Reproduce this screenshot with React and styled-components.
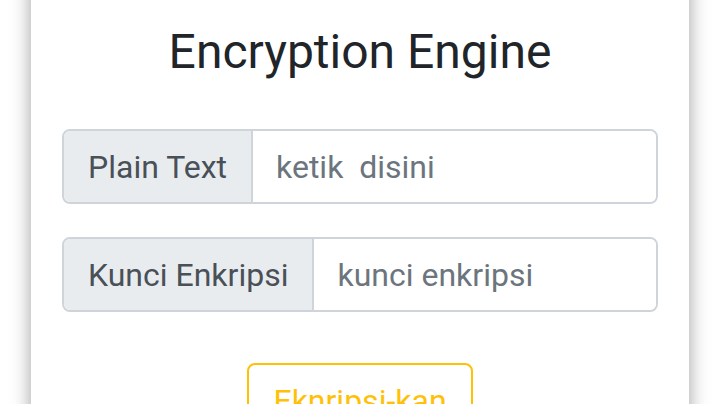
import React from 'react';
import styled, { createGlobalStyle } from 'styled-components';

const GlobalStyle = createGlobalStyle`
	* { box-sizing: border-box; }
	body {
		margin: 0;
		background: #ffffff;
		font-family: Roboto, "Liberation Sans", sans-serif;
		overflow: hidden;
	}
`;

const Page = styled.div`
	display: flex;
	justify-content: center;
	align-items: flex-start;
	height: 404px;
	overflow: hidden;
`;

const Card = styled.div`
	width: 658px;
	margin-top: -40px;
	padding: 63px 31px 60px;
	background: #fff;
	box-shadow: 0 0 18px rgba(0, 0, 0, 0.38);
	display: flex;
	flex-direction: column;
	align-items: center;
`;

const Title = styled.h2`
	margin: 0 0 48px;
	font-size: 48px;
	font-weight: 400;
	line-height: 58px;
	color: #212529;
`;

const Group = styled.div`
	display: flex;
	flex-shrink: 0;
	width: 100%;
	height: 75px;
	margin-bottom: 33px;
	border: 2px solid #ced4da;
	border-radius: 8px;
	overflow: hidden;
`;

const Label = styled.span`
	display: flex;
	align-items: center;
	padding: 0 24px;
	background: #e9ecef;
	border-right: 2px solid #ced4da;
	color: #495057;
	font-size: 32px;
	white-space: nowrap;
`;

const Field = styled.input`
	flex: 1;
	min-width: 0;
	border: none;
	outline: none;
	padding: 0 23px;
	font-family: Roboto, "Liberation Sans", sans-serif;
	font-size: 32px;
	color: #495057;
	&::placeholder {
		color: #6c757d;
		white-space: pre;
	}
`;

const Button = styled.button`
	flex-shrink: 0;
	margin-top: 18px;
	width: 226px;
	height: 75px;
	padding: 0 24px;
	background: transparent;
	border: 2px solid #ffc107;
	border-radius: 8px;
	color: #ffc107;
	font-family: Roboto, "Liberation Sans", sans-serif;
	font-size: 32px;
`;

export default function App() {
	return (
		<Page>
			<GlobalStyle />
			<Card>
				<Title>Encryption Engine</Title>
				<Group>
					<Label>Plain Text</Label>
					<Field placeholder='ketik  disini' />
				</Group>
				<Group>
					<Label>Kunci Enkripsi</Label>
					<Field placeholder='kunci enkripsi' />
				</Group>
				<Button>Eknripsi-kan</Button>
			</Card>
		</Page>
	);
}
